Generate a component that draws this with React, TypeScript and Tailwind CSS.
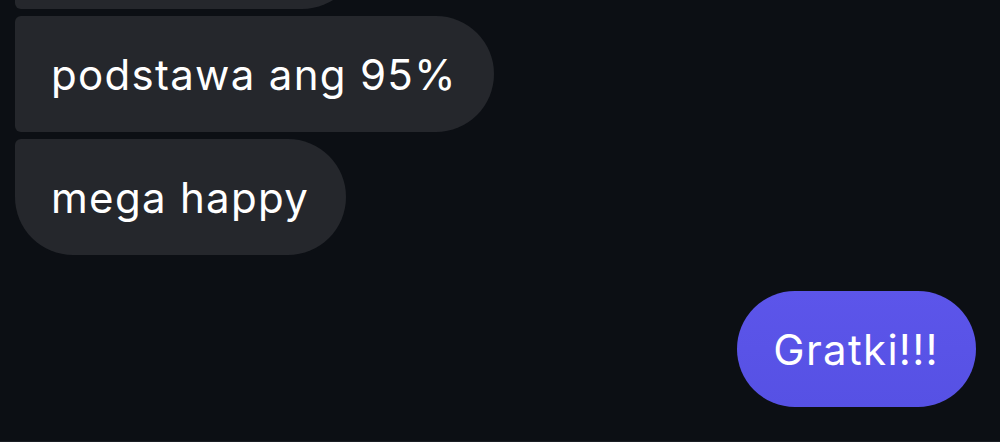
export default function App() {
  const font = { fontFamily: 'Inter, "Noto Sans", sans-serif' };
  return (
    <div className="w-[1000px] h-[442px] overflow-hidden bg-[#0c0f14] relative" style={font}>
      <div className="flex flex-col gap-[7px] pl-[15px] pr-[24px]">
        <div className="mt-[-107px] w-[345px] h-[116px] bg-[#25272c] rounded-tl-[58px] rounded-tr-[58px] rounded-bl-[6px] rounded-br-[58px]" />
        <div className="self-start h-[116px] bg-[#25272c] rounded-[6px] rounded-tr-[58px] rounded-br-[58px] flex items-center pl-[36px] pr-[37px] text-white text-[42px] tracking-[1.3px]">
          podstawa ang 95%
        </div>
        <div className="self-start h-[116px] bg-[#25272c] rounded-tl-[6px] rounded-tr-[58px] rounded-br-[58px] rounded-bl-[58px] flex items-center pl-[36px] pr-[37px] text-white text-[42px] tracking-[1.3px]">
          mega happy
        </div>
        <div className="self-end mt-[29px] h-[116px] rounded-full bg-gradient-to-b from-[#5c55ea] to-[#5651e4] flex items-center pl-[36px] pr-[37px] text-white text-[42px] tracking-[1.3px]">
          Gratki!!!
        </div>
      </div>
      <div className="absolute bottom-0 left-0 w-full h-[1px] bg-[#1b1e24]" />
    </div>
  );
}
